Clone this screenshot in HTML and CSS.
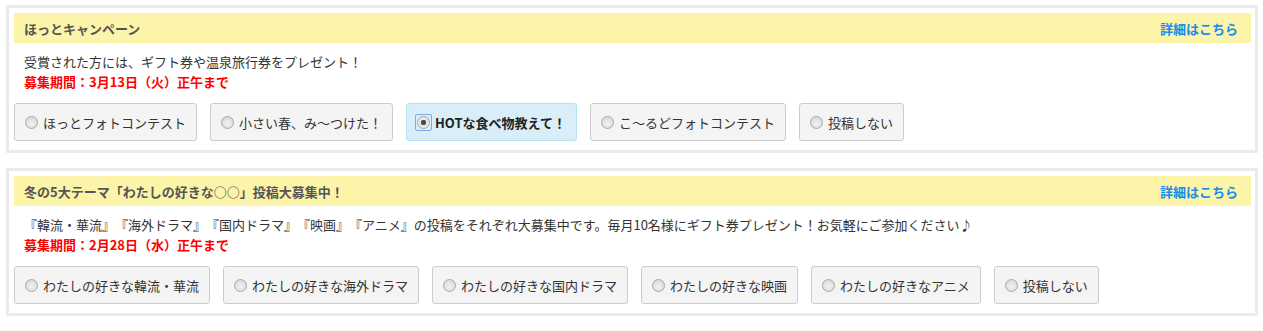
FILE: index.html
```html
<!DOCTYPE html>
<html lang="ja">
<head>
  <meta charset="UTF-8">
  <title>キャンペーン</title>
  <link rel="stylesheet" href="styles.css">
</head>
<body>
  <!-- ほっとキャンペーン -->
  <div class="campaign">
    <div class="campaign-head">
      <h2>ほっとキャンペーン</h2>
      <a href="#">詳細はこちら</a>
    </div>
    <div class="campaign-body">
      <p class="lead">受賞された方には、ギフト券や温泉旅行券をプレゼント！</p>
      <p class="deadline">募集期間：3月13日（火）正午まで</p>
      <ul class="choices">
        <li class="choice"><span class="radio"></span>ほっとフォトコンテスト</li>
        <li class="choice"><span class="radio"></span>小さい春、み～つけた！</li>
        <li class="choice is-active"><span class="radio is-checked"></span>HOTな食べ物教えて！</li>
        <li class="choice"><span class="radio"></span>こ～るどフォトコンテスト</li>
        <li class="choice"><span class="radio"></span>投稿しない</li>
      </ul>
    </div>
  </div>

  <!-- 冬の5大テーマ -->
  <div class="campaign">
    <div class="campaign-head">
      <h2>冬の5大テーマ「わたしの好きな○○」投稿大募集中！</h2>
      <a href="#">詳細はこちら</a>
    </div>
    <div class="campaign-body">
      <p class="lead">『韓流・華流』『海外ドラマ』『国内ドラマ』『映画』『アニメ』の投稿をそれぞれ大募集中です。毎月10名様にギフト券プレゼント！お気軽にご参加ください♪</p>
      <p class="deadline">募集期間：2月28日（水）正午まで</p>
      <ul class="choices">
        <li class="choice"><span class="radio"></span>わたしの好きな韓流・華流</li>
        <li class="choice"><span class="radio"></span>わたしの好きな海外ドラマ</li>
        <li class="choice"><span class="radio"></span>わたしの好きな国内ドラマ</li>
        <li class="choice"><span class="radio"></span>わたしの好きな映画</li>
        <li class="choice"><span class="radio"></span>わたしの好きなアニメ</li>
        <li class="choice"><span class="radio"></span>投稿しない</li>
      </ul>
    </div>
  </div>
</body>
</html>
```

FILE: styles.css
```css
body {
  margin: 0;
  padding: 0;
  background-color: #fff;
  font-family: "Noto Sans CJK JP", "Noto Sans", sans-serif;
  font-size: 13px;
  color: #333;
  text-spacing-trim: space-all;
}

.campaign {
  margin: 5px 5px 0 6px;
  padding: 5px 4px 9px 5px;
  border: 3px solid #ebebeb;
  background-color: #fff;
}

.campaign + .campaign {
  margin-top: 15px;
}

.campaign-head {
  display: flex;
  justify-content: space-between;
  align-items: center;
  height: 30px;
  padding: 0 13px 0 10px;
  background-color: #fcf4a8;
}

.campaign-head h2 {
  margin: 0;
  font-size: 13px;
  font-weight: bold;
  color: #555;
}

.campaign-head a {
  font-weight: bold;
  color: #1a8cf0;
  text-decoration: none;
}

.campaign-body {
  padding-top: 9px;
}

.campaign-body p {
  margin: 0;
  padding-left: 10px;
  line-height: 20px;
}

.deadline {
  color: #f00;
  font-weight: bold;
}

.choices {
  display: flex;
  gap: 13px;
  margin: 11px 0 0;
  padding: 0;
  list-style: none;
}

.choice {
  display: flex;
  align-items: center;
  box-sizing: border-box;
  height: 38px;
  padding: 0 10px 0 10px;
  border: 1px solid #ccc;
  border-radius: 3px;
  background-color: #f4f4f4;
  white-space: nowrap;
}

.choice.is-active {
  border-color: #b5e0f2;
  background-color: #d9eef8;
  font-weight: bold;
  color: #222;
}

.radio {
  position: relative;
  flex: none;
  box-sizing: border-box;
  width: 13px;
  height: 13px;
  margin-right: 5px;
  border: 1px solid #a8a8a8;
  border-radius: 50%;
  background: radial-gradient(circle at 50% 60%, #f2f2f2, #d2d2d2);
}

.radio.is-checked {
  background: radial-gradient(circle, #4d4d4d 0 2.5px, #e6e6e6 3px);
}

.radio.is-checked::after {
  content: "";
  position: absolute;
  top: -3px;
  left: -3px;
  right: -3px;
  bottom: -3px;
  border: 1px solid #7eaaea;
  border-radius: 2px;
}
```
